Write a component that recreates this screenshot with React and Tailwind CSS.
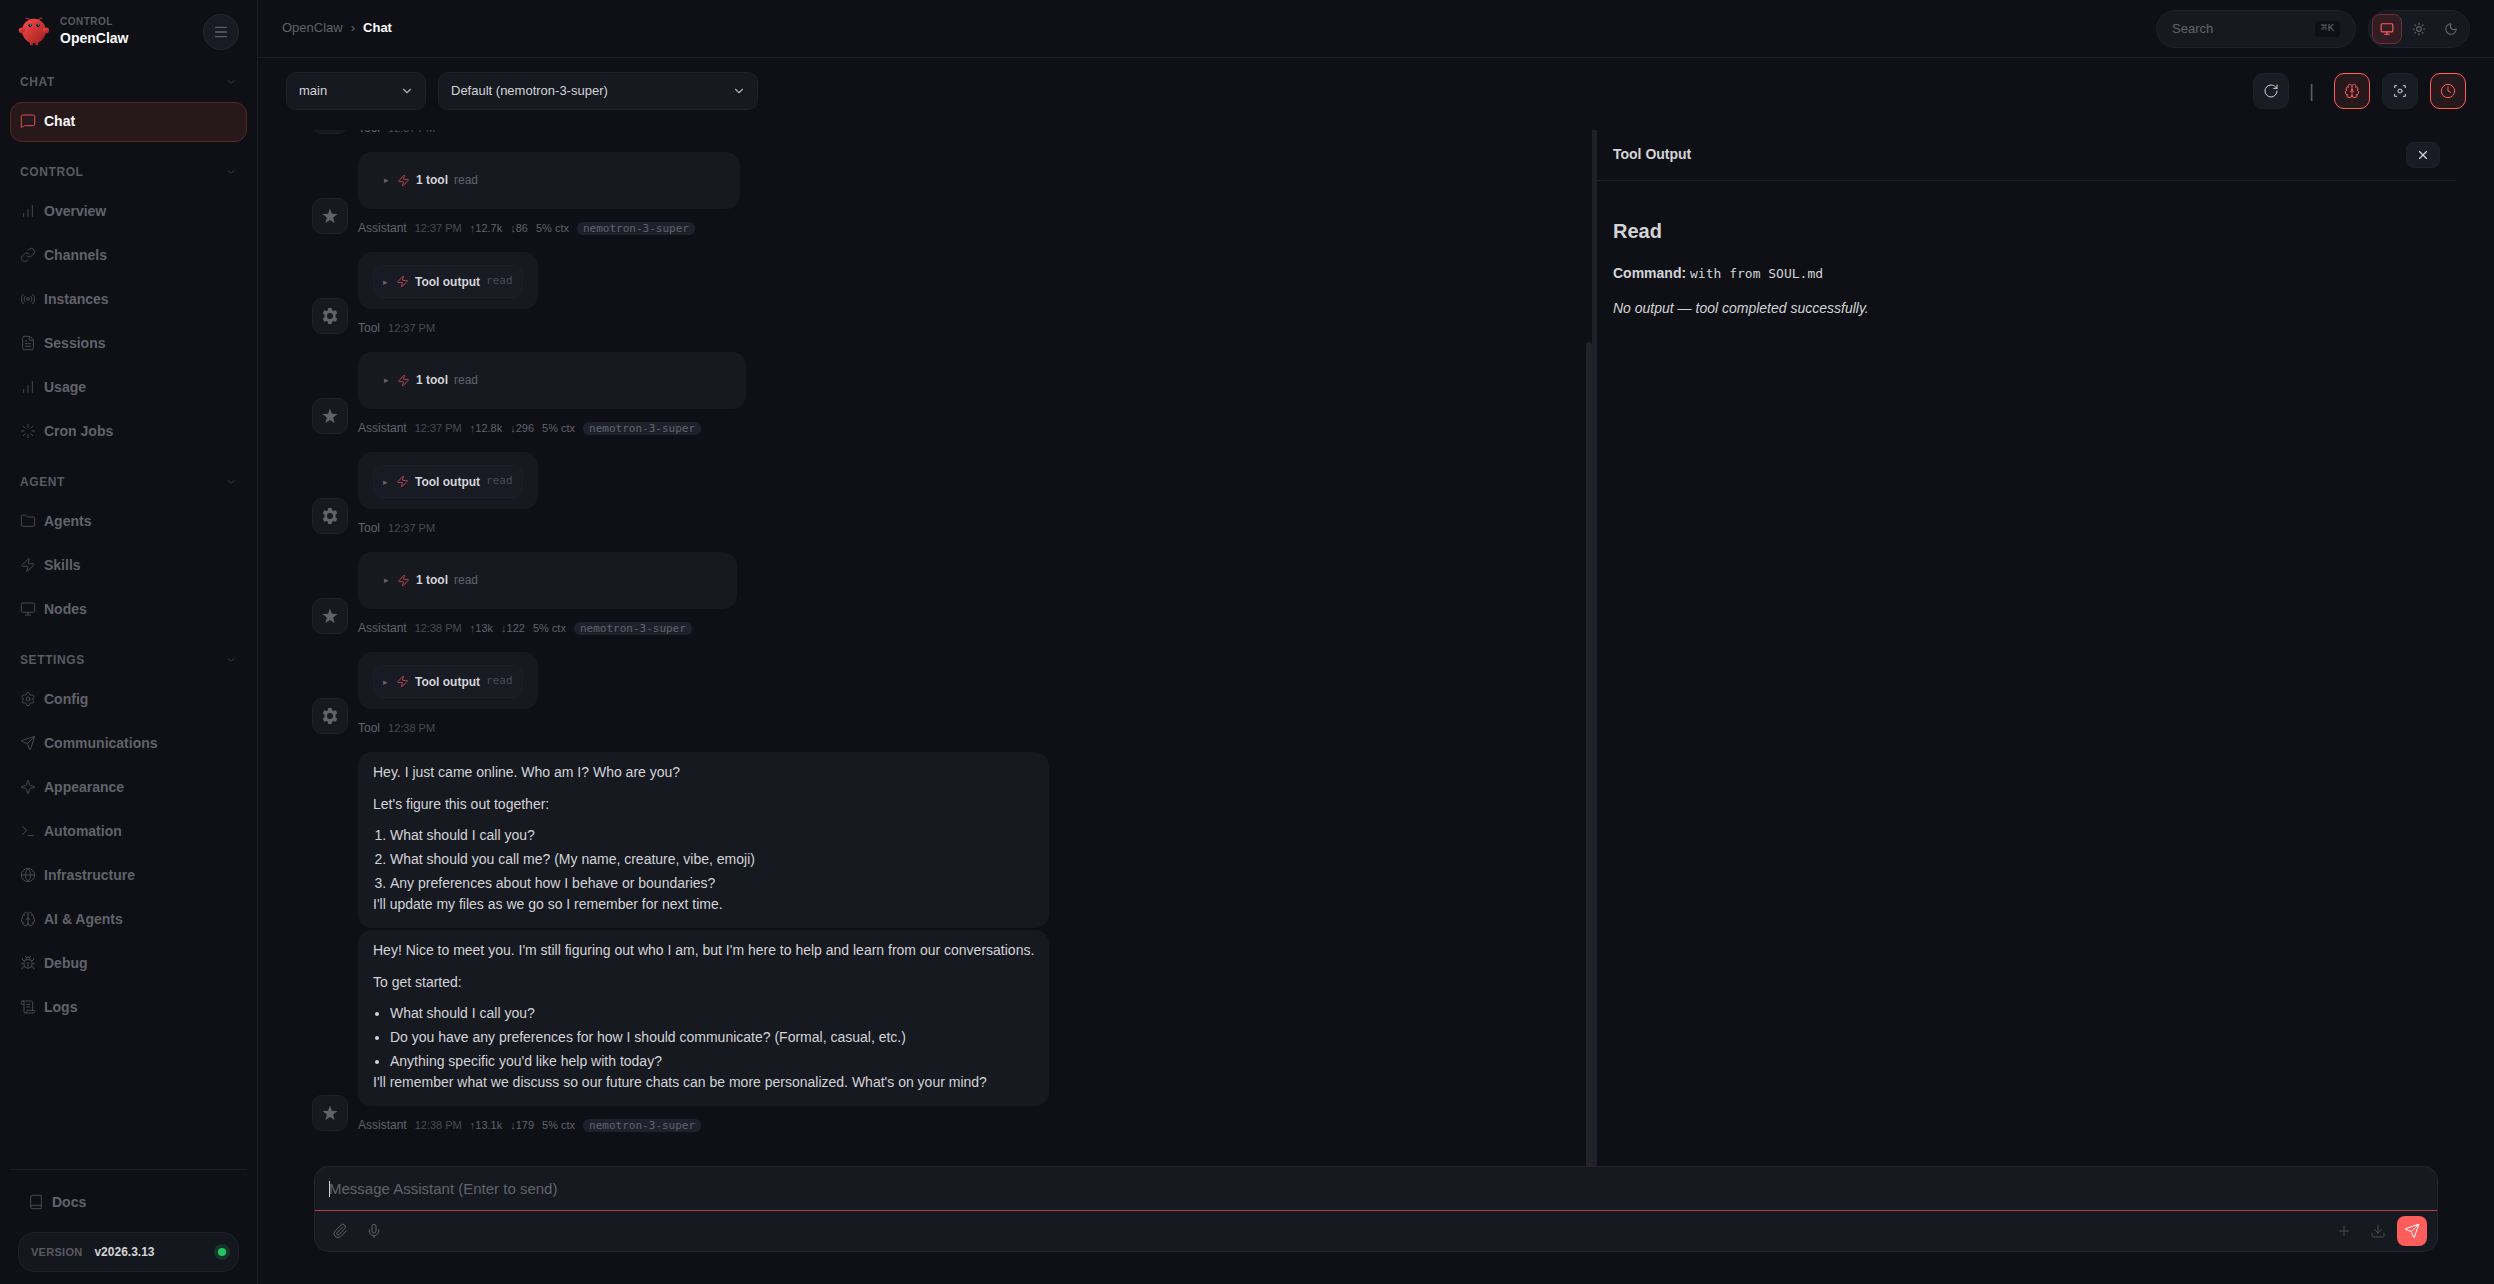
import {
  Brain,
  Bug,
  ChevronDown,
  Clock,
  Download,
  FileText,
  Folder,
  Globe,
  Link,
  Loader,
  Menu,
  MessageSquare,
  Mic,
  Monitor,
  Moon,
  Paperclip,
  Plus,
  Radio,
  RotateCw,
  ScrollText,
  Send,
  Settings,
  Sparkle,
  Sun,
  Terminal,
  X,
  Zap,
} from 'lucide-react'
import clsx from 'clsx'

function BarsIcon(props) {
  return (
    <svg viewBox="0 0 24 24" fill="none" stroke="currentColor" strokeLinecap="round" {...props}>
      <path d="M18.500 20V4M12 20V10M5.500 20v-4" />
    </svg>
  )
}

const NAV = [
  { title: 'Chat', items: [{ label: 'Chat', icon: MessageSquare, active: true }] },
  {
    title: 'Control',
    items: [
      { label: 'Overview', icon: BarsIcon },
      { label: 'Channels', icon: Link },
      { label: 'Instances', icon: Radio },
      { label: 'Sessions', icon: FileText },
      { label: 'Usage', icon: BarsIcon },
      { label: 'Cron Jobs', icon: Loader },
    ],
  },
  {
    title: 'Agent',
    items: [
      { label: 'Agents', icon: Folder },
      { label: 'Skills', icon: Zap },
      { label: 'Nodes', icon: Monitor },
    ],
  },
  {
    title: 'Settings',
    items: [
      { label: 'Config', icon: Settings },
      { label: 'Communications', icon: Send },
      { label: 'Appearance', icon: Sparkle },
      { label: 'Automation', icon: Terminal },
      { label: 'Infrastructure', icon: Globe },
      { label: 'AI & Agents', icon: Brain },
      { label: 'Debug', icon: Bug },
      { label: 'Logs', icon: ScrollText },
    ],
  },
]

function Logo() {
  return (
    <svg viewBox="0 0 120 120" className="size-8" aria-hidden="true">
      <defs>
        <linearGradient id="claw" x1="0" y1="0" x2="1" y2="1">
          <stop offset="0" stopColor="#ff4d4d" />
          <stop offset="1" stopColor="#991b1b" />
        </linearGradient>
      </defs>
      <path
        fill="url(#claw)"
        d="M60 10C30 10 15 35 15 55s15 40 30 45v10h10v-10s5 2 10 0v10h10v-10c15-5 30-25 30-45S90 10 60 10Z"
      />
      <path fill="url(#claw)" d="M20 45C5 40 0 50 5 60s15 5 20-5c3-7 0-10-5-10Z" />
      <path fill="url(#claw)" d="M100 45c15-5 20 5 15 15s-15 5-20-5c-3-7 0-10 5-10Z" />
      <path d="M45 15Q35 5 30 8M75 15Q85 5 90 8" stroke="#ff4d4d" strokeWidth="3" strokeLinecap="round" fill="none" />
      <circle cx="45" cy="35" r="6" fill="#050810" />
      <circle cx="75" cy="35" r="6" fill="#050810" />
      <circle cx="46" cy="34" r="3" fill="#00e5cc" />
      <circle cx="76" cy="34" r="3" fill="#00e5cc" />
    </svg>
  )
}

function Sidebar() {
  return (
    <aside className="flex w-[258px] shrink-0 flex-col border-r border-[#1a1c23] px-[10px]">
      <div className="flex h-16 items-center gap-[10px] px-2">
        <Logo />
        <div className="flex-1">
          <div className="text-[10px] font-bold leading-3 tracking-wider text-[#5a5a63]">CONTROL</div>
          <div className="text-sm font-bold leading-5 text-[#fafafa]">OpenClaw</div>
        </div>
        <button
          aria-label="Collapse sidebar"
          className="flex size-9 items-center justify-center rounded-full border border-[#262932] bg-[#181b23] text-[#5f5f68]"
        >
          <Menu className="size-4" strokeWidth={2} />
        </button>
      </div>

      <nav className="flex flex-1 flex-col gap-4 pt-1">
        {NAV.map((group) => (
          <section key={group.title} className="flex flex-col gap-[6px]">
            <button className="flex h-7 items-center justify-between px-[10px] text-xs font-bold tracking-wider text-[#5a5a63]">
              {group.title.toUpperCase()}
              <ChevronDown className="size-3 text-[#3d3f47]" />
            </button>
            <div className="flex flex-col gap-1">
              {group.items.map(({ label, icon: Icon, active }) => (
                <a
                  key={label}
                  href="#"
                  className={clsx(
                    'flex h-10 items-center gap-2 rounded-xl border px-[9px] pb-[2px] text-sm font-bold',
                    active ? 'border-[#55262b] bg-[#27181c] text-[#fafafa]' : 'border-transparent text-[#62626b]',
                  )}
                >
                  <Icon className={clsx('size-4', active ? 'text-[#d94f51]' : 'text-[#474850]')} strokeWidth={1.5} />
                  {label}
                </a>
              ))}
            </div>
          </section>
        ))}
      </nav>

      <div className="border-t border-[#1a1c23] px-2 py-3">
        <a href="#" className="flex h-10 items-center gap-2 px-[10px] text-sm font-bold text-[#62626b]">
          <svg
            viewBox="0 0 24 24"
            className="size-4 text-[#474850]"
            fill="none"
            stroke="currentColor"
            strokeWidth="1.5"
            strokeLinejoin="round"
          >
            <path d="M4 19.500v-15A2.500 2.500 0 0 1 6.500 2H20v20H6.500A2.500 2.500 0 0 1 4 19.500ZM4 19.500A2.500 2.500 0 0 1 6.500 17H20" />
          </svg>
          Docs
        </a>
        <div className="mt-[10px] flex h-10 items-center gap-3 rounded-2xl border border-[#1e2129] bg-[#14171d] px-3">
          <span className="text-[11px] font-bold tracking-wide text-[#5a5a63]">VERSION</span>
          <span className="flex-1 text-xs font-bold text-[#d4d4d8]">v2026.3.13</span>
          <span className="size-2 rounded-full bg-[#22c55e] ring-4 ring-[#15362a]" />
        </div>
      </div>
    </aside>
  )
}

function Topbar() {
  return (
    <header className="flex h-[58px] shrink-0 items-center border-b border-[#1a1c23] px-6">
      <nav aria-label="Breadcrumb" className="flex flex-1 items-center gap-2 pb-[2px] text-[13px] leading-5 text-[#62626b]">
        <a href="#">OpenClaw</a>
        <span>›</span>
        <span className="font-bold text-[#fafafa]">Chat</span>
      </nav>
      <button className="flex h-[38px] w-[200px] items-center justify-between rounded-full border border-[#1e2129] bg-[#161920] px-[15px] text-[13px] text-[#62626b]">
        Search
        <kbd className="flex h-4 items-center rounded bg-[#0e1015] px-[6px] font-['Liberation_Mono','DejaVu_Sans_Mono',monospace] text-[11px]">
          ⌘K
        </kbd>
      </button>
      <div className="ml-3 flex h-[38px] items-center gap-[2px] rounded-full border border-[#1e2129] bg-[#161920] px-[3px]">
        <button
          aria-label="System theme"
          className="flex size-[30px] items-center justify-center rounded-lg border border-[#6b2f34] bg-[#331d23] text-[#ff5c5c]"
        >
          <Monitor className="size-[14px]" strokeWidth={2} />
        </button>
        <button aria-label="Light theme" className="flex size-[30px] items-center justify-center text-[#62626b]">
          <Sun className="size-[14px]" strokeWidth={2} />
        </button>
        <button aria-label="Dark theme" className="flex size-[30px] items-center justify-center text-[#62626b]">
          <Moon className="size-[14px]" strokeWidth={2} />
        </button>
      </div>
    </header>
  )
}

function Picker({ label, value, className }) {
  return (
    <div className={clsx('grid h-[38px] items-center', className)}>
      <select
        aria-label={label}
        className="col-start-1 row-start-1 h-full w-full appearance-none rounded-[10px] border border-[#1e2129] bg-[#161920] px-3 text-[13px] text-[#d4d4d8]"
      >
        <option>{value}</option>
      </select>
      <ChevronDown className="pointer-events-none col-start-1 row-start-1 mr-3 size-[14px] justify-self-end text-[#b0b0b6]" />
    </div>
  )
}

function ToolButton({ label, active, children }) {
  return (
    <button
      aria-label={label}
      className={clsx(
        'flex size-9 items-center justify-center rounded-[10px] border',
        active ? 'border-[#ff5c5c] bg-[#27181c] text-[#ff5c5c]' : 'border-[#1e2129] bg-[#191c24] text-[#d4d4d8]',
      )}
    >
      {children}
    </button>
  )
}

function Toolbar() {
  return (
    <div className="flex h-[72px] shrink-0 items-center gap-3 px-7 pb-[6px]">
      <Picker label="Session" value="main" className="w-[140px]" />
      <Picker label="Model" value="Default (nemotron-3-super)" className="w-[320px]" />
      <div className="ml-auto flex items-center gap-3">
        <ToolButton label="Refresh">
          <RotateCw className="size-4" strokeWidth={1.5} />
        </ToolButton>
        <span className="mx-2 text-lg leading-6 text-[#62626b]">|</span>
        <ToolButton label="Thinking" active>
          <Brain className="size-4" strokeWidth={1.5} />
        </ToolButton>
        <ToolButton label="Focus mode">
          <svg
            viewBox="0 0 24 24"
            className="size-4"
            fill="none"
            stroke="currentColor"
            strokeWidth="1.5"
            strokeLinecap="round"
            strokeLinejoin="round"
          >
            <path d="M4 7V4h3M20 7V4h-3M4 17v3h3M20 17v3h-3" />
            <circle cx="12" cy="12" r="3" />
          </svg>
        </ToolButton>
        <ToolButton label="Cron sessions" active>
          <Clock className="size-4" strokeWidth={1.5} />
        </ToolButton>
      </div>
    </div>
  )
}

function Avatar({ role }) {
  return (
    <div className="mb-1 flex size-9 shrink-0 items-center justify-center rounded-[10px] border border-[#1e2129] bg-[#161920] text-[#62626b]">
      <svg viewBox="0 0 24 24" className={role === 'Assistant' ? 'size-[18px]' : 'size-4'} fill="currentColor">
        {role === 'Assistant' ? (
          <path d="m12 2 2.600 7.100 7.400.3-5.800 4.700 2 7.200-6.200-4.100-6.200 4.100 2-7.200L2 9.400l7.400-.3z" />
        ) : (
          <path
            fillRule="evenodd"
            d="M9.500 0h5l.6 3.300 2.200 1.300 3.200-1.200 2.500 4.300-2.600 2.200v4.200l2.600 2.200-2.500 4.300-3.200-1.200-2.200 1.300-.6 3.300h-5l-.6-3.300-2.200-1.300-3.200 1.200L1 16.300l2.600-2.200V9.900L1 7.700l2.500-4.300 3.200 1.200 2.200-1.300zM12 7.500a4.500 4.500 0 1 0 0 9 4.500 4.500 0 0 0 0-9z"
          />
        )}
      </svg>
    </div>
  )
}

function Group({ role, time, usage, children }) {
  return (
    <article className="mb-[14px] flex items-end gap-[10px]">
      <Avatar role={role} />
      <div className="flex flex-col">
        <div className="flex flex-col gap-[2px]">{children}</div>
        <footer className={clsx('mt-[9px] flex h-5 items-center gap-2 text-[11px] text-[#62626b]', usage && 'pr-[45px]')}>
          <span className="text-xs">{role}</span>
          <span className="text-[#4a4a52]">{time}</span>
          {usage?.map((part) => (
            <span key={part}>{part}</span>
          ))}
          {usage && (
            <span className="rounded-md bg-[#1e212c] px-[6px] font-['DejaVu_Sans_Mono',monospace] text-[11px] leading-[13px]">
              nemotron-3-super
            </span>
          )}
        </footer>
      </div>
    </article>
  )
}

function ToolCall() {
  return (
    <details className="h-[57px] rounded-[14px] bg-[#161920] px-[26px] text-xs">
      <summary className="flex h-14 list-none items-center">
        <span className="w-[13px] text-[9px] text-[#62626b]">▸</span>
        <Zap className="mr-[6px] size-[13px] text-[#d94f51]" strokeWidth={1.5} />
        <span className="mr-[6px] font-bold text-[#d4d4d8]">1 tool</span>
        <span className="text-[#62626b]">read</span>
      </summary>
    </details>
  )
}

function ToolOutput() {
  return (
    <div className="h-[57px] rounded-[14px] bg-[#161920] px-[15px] pt-[13px]">
      <details className="rounded-[10px] border border-[#1c1f29] bg-[#181a24] px-[9px] text-xs">
        <summary className="flex h-[31px] list-none items-center">
          <span className="w-[13px] text-[9px] text-[#62626b]">▸</span>
          <Zap className="mr-[6px] size-[13px] text-[#d94f51]" strokeWidth={1.5} />
          <span className="mr-[6px] font-bold text-[#d4d4d8]">Tool output</span>
          <span className="font-['DejaVu_Sans_Mono',monospace] text-[11px] text-[#4a4a52]">read</span>
        </summary>
      </details>
    </div>
  )
}

function Bubble({ lead, intro, list: List, items, outro }) {
  return (
    <div className="h-44 rounded-[14px] bg-[#161920] px-[15px] pt-[10px] text-sm leading-[21px] text-[#d4d4d8]">
      <p>{lead}</p>
      <p className="mt-[11px]">{intro}</p>
      <List className={clsx('mt-[10px] flex flex-col gap-[3px] pl-[17px]', List === 'ol' ? 'list-decimal' : 'list-disc')}>
        {items.map((item) => (
          <li key={item}>{item}</li>
        ))}
      </List>
      <p>{outro}</p>
    </div>
  )
}

const TURNS = [
  { time: '12:37 PM', usage: ['↑12.7k', '↓86', '5% ctx'] },
  { time: '12:37 PM', usage: ['↑12.8k', '↓296', '5% ctx'] },
  { time: '12:38 PM', usage: ['↑13k', '↓122', '5% ctx'] },
]

function Thread() {
  return (
    <section className="flex w-3/5 flex-col justify-end overflow-hidden px-4 pb-[17px]">
      <Group role="Tool" time="12:37 PM" />
      {TURNS.map((turn) => (
        <div key={turn.usage[0]}>
          <Group role="Assistant" time={turn.time} usage={turn.usage}>
            <ToolCall />
          </Group>
          <Group role="Tool" time={turn.time}>
            <ToolOutput />
          </Group>
        </div>
      ))}
      <Group role="Assistant" time="12:38 PM" usage={['↑13.1k', '↓179', '5% ctx']}>
        <Bubble
          lead="Hey. I just came online. Who am I? Who are you?"
          intro="Let's figure this out together:"
          list="ol"
          items={[
            'What should I call you?',
            'What should you call me? (My name, creature, vibe, emoji)',
            'Any preferences about how I behave or boundaries?',
          ]}
          outro="I'll update my files as we go so I remember for next time."
        />
        <Bubble
          lead="Hey! Nice to meet you. I'm still figuring out who I am, but I'm here to help and learn from our conversations."
          intro="To get started:"
          list="ul"
          items={[
            'What should I call you?',
            'Do you have any preferences for how I should communicate? (Formal, casual, etc.)',
            "Anything specific you'd like help with today?",
          ]}
          outro="I'll remember what we discuss so our future chats can be more personalized. What's on your mind?"
        />
      </Group>
    </section>
  )
}

function OutputPanel() {
  return (
    <aside className="flex-1 text-sm text-[#d4d4d8]">
      <header className="flex h-[51px] items-center justify-between border-b border-[#1e2129] px-4">
        <h2 className="pb-[2px] font-bold">Tool Output</h2>
        <button
          aria-label="Close"
          className="flex h-[26px] w-[34px] items-center justify-center rounded-lg border border-[#1e2129] bg-[#191c24]"
        >
          <X className="size-[14px]" strokeWidth={2} />
        </button>
      </header>
      <div className="px-4 pt-9">
        <h3 className="text-xl font-bold leading-7">Read</h3>
        <p className="mt-[18px] leading-[21px]">
          <strong>Command:</strong>{' '}
          <code className="font-['DejaVu_Sans_Mono',monospace] text-[13px]">with from SOUL.md</code>
        </p>
        <p className="mt-[14px] leading-[21px]">
          <em>No output — tool completed successfully.</em>
        </p>
      </div>
    </aside>
  )
}

function Composer() {
  return (
    <form className="relative mx-[18px] mb-8 shrink-0 overflow-hidden rounded-[14px] border border-[#2c2127] bg-[#161920]">
      <textarea
        rows={1}
        aria-label="Message"
        placeholder="Message Assistant (Enter to send)"
        className="block h-[44px] w-full resize-none border-b border-[#b24246] px-[14px] pt-3 text-[15px] leading-5 text-[#d4d4d8] caret-transparent outline-none placeholder:text-[#62626b]"
      />
      {/* text cursor */}
      <span className="pointer-events-none absolute left-[14px] top-[14px] h-4 w-px bg-[#d4d4d8]" />
      <div className="flex h-10 items-center pl-2 pr-[10px] text-[#62626b]">
        <button type="button" aria-label="Attach file" className="flex h-8 w-[34px] items-center justify-center">
          <Paperclip className="size-4" strokeWidth={1.5} />
        </button>
        <button type="button" aria-label="Voice input" className="flex h-8 w-[34px] items-center justify-center">
          <Mic className="size-4" strokeWidth={1.5} />
        </button>
        <button type="button" aria-label="New session" className="ml-auto flex h-8 w-[34px] items-center justify-center text-[#4a4b54]">
          <Plus className="size-4" strokeWidth={1.5} />
        </button>
        <button type="button" aria-label="Export" className="flex h-8 w-[34px] items-center justify-center text-[#4a4b54]">
          <Download className="size-4" strokeWidth={1.5} />
        </button>
        <button
          type="submit"
          aria-label="Send"
          className="ml-[2px] flex size-[30px] items-center justify-center rounded-lg bg-[#ff5c5c] text-white"
        >
          <Send className="size-4" strokeWidth={1.5} />
        </button>
      </div>
    </form>
  )
}

export default function App() {
  return (
    <div className="flex h-screen overflow-hidden bg-[#0e1015] font-['Liberation_Sans',Arial,sans-serif]">
      <Sidebar />
      <main className="flex min-w-0 flex-1 flex-col">
        <Topbar />
        <Toolbar />
        <div className="mx-[38px] flex min-h-0 flex-1">
          <Thread />
          <div className="-ml-[6px] mt-[212px] w-[6px] shrink-0 rounded-t-full bg-[#232428]" />
          <div className="w-[5px] shrink-0 bg-[#1e2129]" />
          <OutputPanel />
        </div>
        <div className="mx-[38px]">
          <Composer />
        </div>
      </main>
    </div>
  )
}
